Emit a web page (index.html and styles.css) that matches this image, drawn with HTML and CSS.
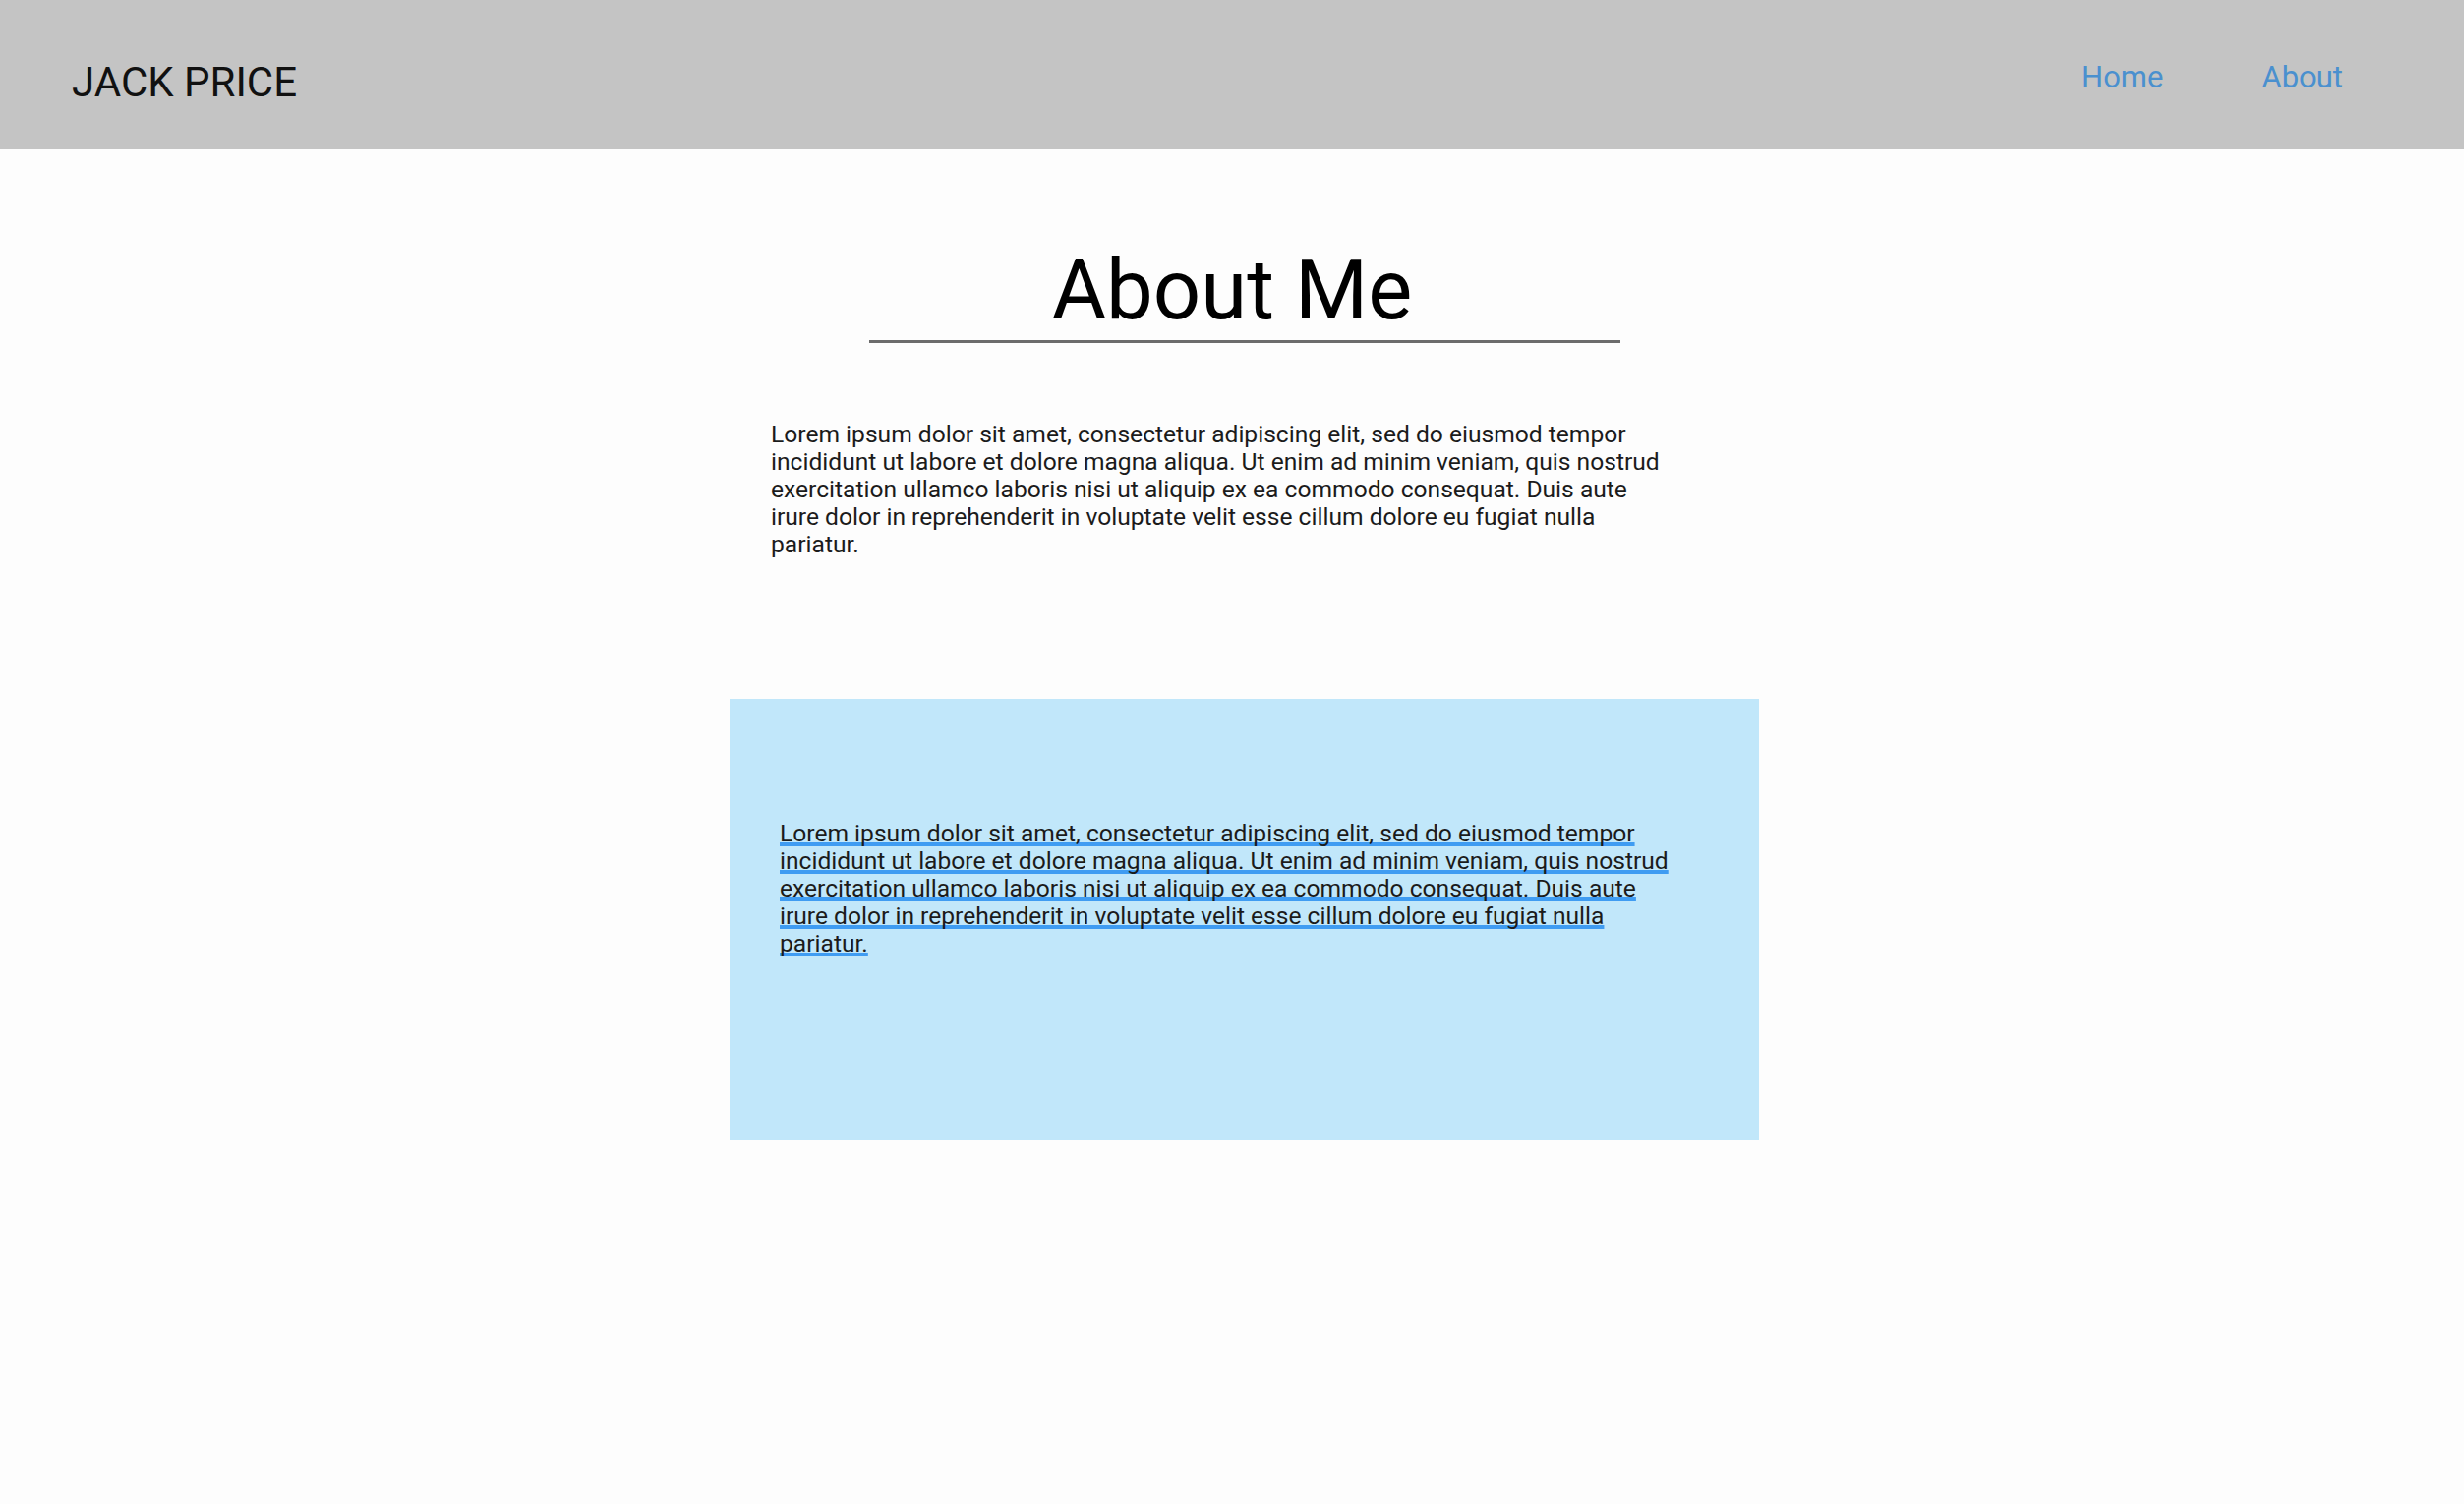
FILE: index.html
```html
<!DOCTYPE html>
<html lang="en">
<head>
<meta charset="utf-8">
<title>Jack Price - About</title>
<link rel="stylesheet" href="styles.css">
</head>
<body>
<header class="topbar">
  <div class="brand">JACK PRICE</div>
  <nav class="nav">
    <a class="nav-link" href="#">Home</a>
    <a class="nav-link" href="#">About</a>
  </nav>
</header>
<main class="page">
  <h1 class="title">About Me</h1>
  <section class="content">
    <div class="rule"></div>
    <p class="intro">Lorem ipsum dolor sit amet, consectetur adipiscing elit, sed do eiusmod tempor incididunt ut labore et dolore magna aliqua. Ut enim ad minim veniam, quis nostrud exercitation ullamco laboris nisi ut aliquip ex ea commodo consequat. Duis aute irure dolor in reprehenderit in voluptate velit esse cillum dolore eu fugiat nulla pariatur.</p>
    <div class="card">
      <p class="card-text">Lorem ipsum dolor sit amet, consectetur adipiscing elit, sed do eiusmod tempor incididunt ut labore et dolore magna aliqua. Ut enim ad minim veniam, quis nostrud exercitation ullamco laboris nisi ut aliquip ex ea commodo consequat. Duis aute irure dolor in reprehenderit in voluptate velit esse cillum dolore eu fugiat nulla pariatur.</p>
    </div>
  </section>
</main>
</body>
</html>
```
FILE: styles.css
```css
html, body {
  margin: 0;
  padding: 0;
}
body {
  background: #fdfdfd;
  font-family: Roboto, "Liberation Sans", Arial, sans-serif;
  color: #000;
  height: 1530px;
  overflow: hidden;
}
.topbar {
  height: 152px;
  box-sizing: border-box;
  background: #c4c4c4;
  display: flex;
  justify-content: space-between;
  align-items: flex-start;
  padding: 63px 123px 0 73px;
}
.brand {
  font-size: 42px;
  line-height: 1;
  color: #111;
}
.nav {
  display: flex;
  gap: 100px;
}
.nav-link {
  font-size: 31px;
  line-height: 1;
  color: #4a90cf;
  text-decoration: none;
}
.page {
  padding-top: 101px;
}
.title {
  margin: 0;
  font-size: 85px;
  line-height: 85px;
  font-weight: 400;
  text-align: center;
  color: #000;
}
.content {
  width: 1047px;
  margin-left: calc(50% - 511px);
}
.rule {
  width: 764px;
  height: 3px;
  background: #6c6c6c;
  margin: 8px auto 0;
}
.intro {
  margin: 79px 0 0 42px;
  width: 915px;
  font-size: 24.6px;
  line-height: 28px;
  color: #1b1b1b;
}
.card {
  margin-top: 143px;
  height: 449px;
  box-sizing: border-box;
  background: #c1e7fa;
  padding: 123px 0 0 51px;
}
.card-text {
  margin: 0;
  width: 915px;
  font-size: 24.6px;
  line-height: 28px;
  color: #1b1b1b;
  text-decoration: underline;
  text-decoration-color: #3f9cf2;
  text-decoration-thickness: 4px;
  text-underline-offset: 1px;
  text-decoration-skip-ink: none;
}
```
